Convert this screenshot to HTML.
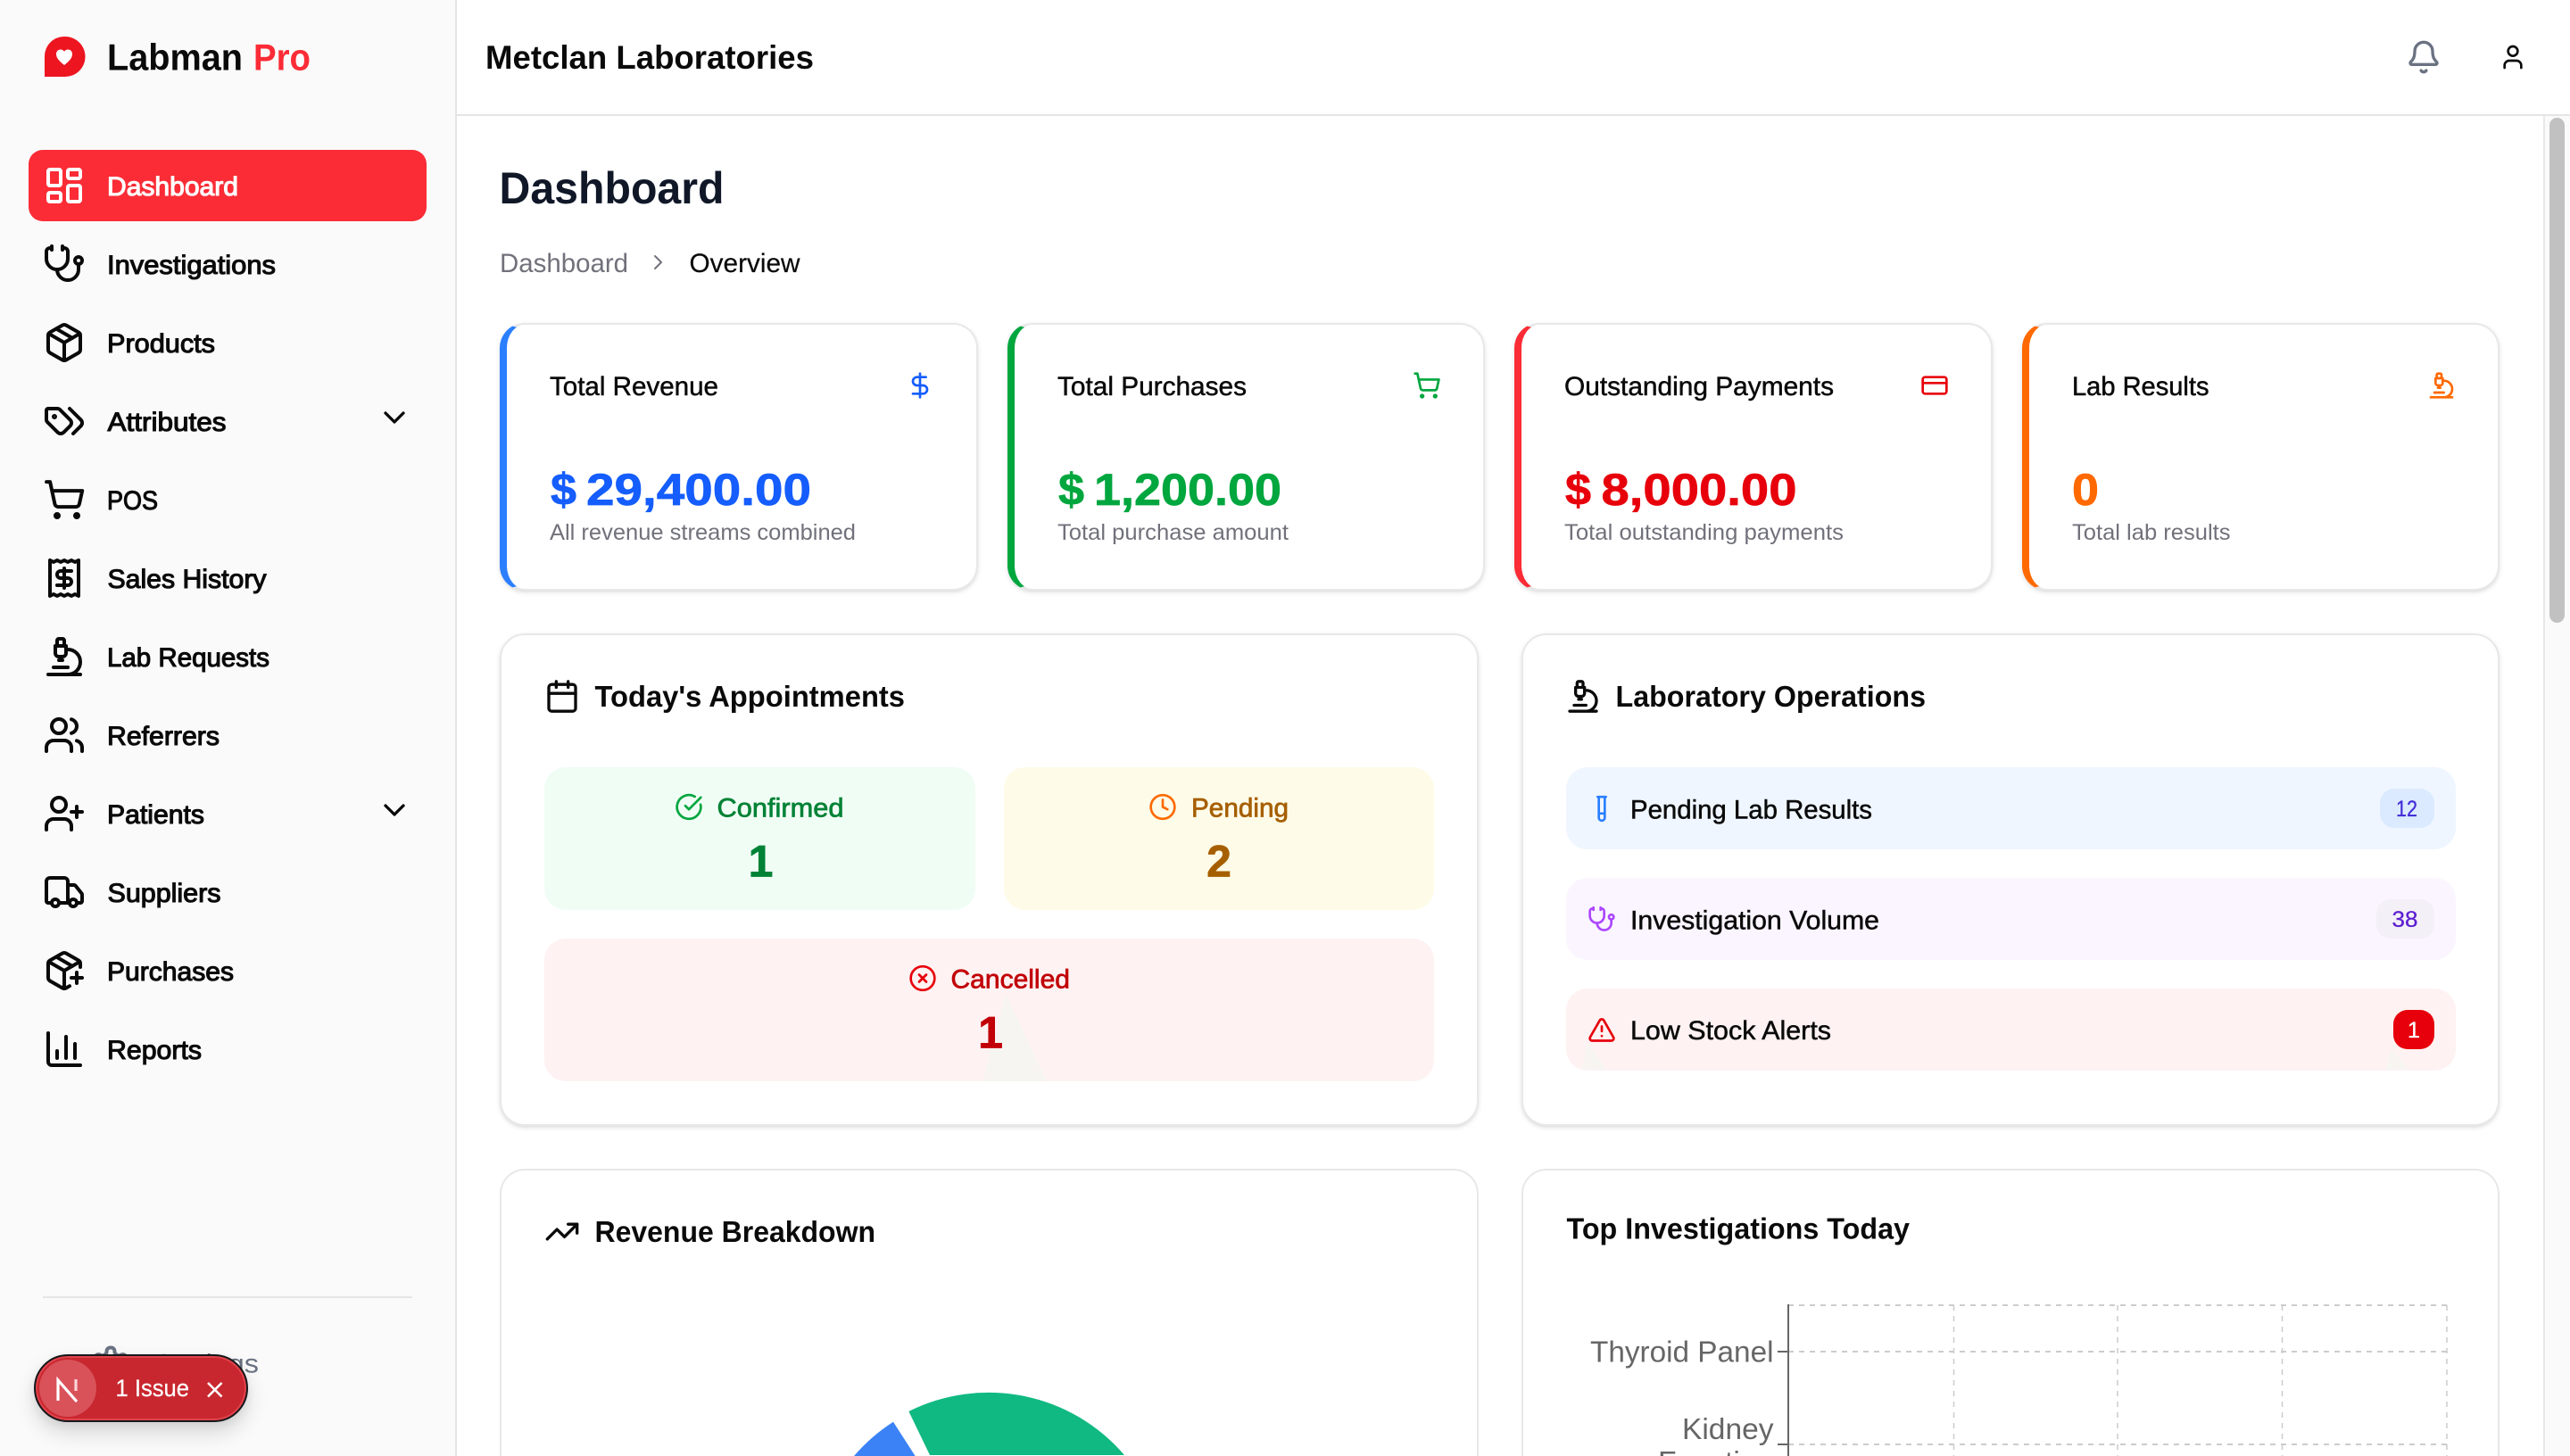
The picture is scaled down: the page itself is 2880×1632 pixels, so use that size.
<!DOCTYPE html>
<html lang="en"><head><meta charset="utf-8"><title>Labman Pro</title>
<style>
html,body{margin:0;padding:0;width:2880px;height:1632px;overflow:hidden;background:#fff;font-family:"Liberation Sans",sans-serif}
#p{position:relative;width:2880px;height:1632px;overflow:hidden}
.a{position:absolute;box-sizing:border-box}
.card{background:#fff;border:2px solid #e8e8e8;border-radius:28px;box-shadow:0 2px 6px rgba(0,0,0,.1),0 2px 4px -2px rgba(0,0,0,.1)}
.open{border-bottom:0;border-radius:28px 28px 0 0;box-shadow:none}
svg{position:absolute;left:0;top:0;overflow:hidden}
text{font-family:"Liberation Sans",sans-serif}
.nav{font-size:29.5px;font-weight:400;fill:#0a0a0a;stroke:#0a0a0a;stroke-width:1.1px}
.h{font-size:33.5px;font-weight:700;fill:#0a0a0a}
.t{font-size:29.5px;fill:#0a0a0a;stroke:#0a0a0a;stroke-width:.5px}
.v{font-size:50px;font-weight:700;stroke-width:.7px}
.s{font-size:25px;fill:#71717b}
.l{font-size:29.5px;stroke-width:.7px}
.n{font-size:50px;font-weight:700;stroke-width:.7px}
.i{fill:none;stroke-linecap:round;stroke-linejoin:round}
.ax{font-size:33.5px;fill:#666}
</style></head><body><div id="p">
<div class="a" style="left:0;top:0;width:512px;height:1632px;background:#fafafa;border-right:2px solid #e5e5e5"></div>
<div class="a" style="left:512px;top:128px;width:2368px;height:2px;background:#e5e5e5"></div>
<div class="a" style="left:32px;top:168px;width:446px;height:80px;background:#fb2c36;border-radius:16px"></div>
<div class="a" style="left:48px;top:1453px;width:414px;height:2px;background:#e5e5e5"></div>
<div class="a" style="left:2850px;top:130px;width:30px;height:1502px;background:#fafafa;border-left:2px solid #e8e8e8"></div>
<div class="a" style="left:2857px;top:132px;width:17px;height:566px;background:#c1c1c1;border-radius:9px"></div>

<div class="a card" style="left:560px;top:362px;width:536px;height:300px;border-left:8px solid #2b7fff"></div>
<div class="a card" style="left:1129px;top:362px;width:535px;height:300px;border-left:8px solid #00a63e"></div>
<div class="a card" style="left:1697px;top:362px;width:536px;height:300px;border-left:8px solid #fb2c36"></div>
<div class="a card" style="left:2266px;top:362px;width:535px;height:300px;border-left:8px solid #ff6900"></div>

<div class="a card" style="left:560px;top:710px;width:1097px;height:552px"></div>
<div class="a card" style="left:1705px;top:710px;width:1096px;height:552px"></div>
<div class="a card open" style="left:560px;top:1310px;width:1097px;height:322px"></div>
<div class="a card open" style="left:1705px;top:1310px;width:1096px;height:322px"></div>

<div class="a" style="left:610px;top:860px;width:483px;height:160px;background:#f0fdf4;border-radius:24px"></div>
<div class="a" style="left:1125px;top:860px;width:482px;height:160px;background:#fefce8;border-radius:24px"></div>
<div class="a" style="left:610px;top:1052px;width:997px;height:160px;background:#fef2f2;border-radius:24px"></div>
<div class="a" style="left:1755px;top:860px;width:997px;height:92px;background:#eff6ff;border-radius:24px"></div>
<div class="a" style="left:1755px;top:984px;width:997px;height:92px;background:#faf5ff;border-radius:24px"></div>
<div class="a" style="left:1755px;top:1108px;width:997px;height:92px;background:#fef2f2;border-radius:24px"></div>
<div class="a" style="left:2667px;top:884px;width:61px;height:44px;background:#dbeafe;border-radius:16px"></div>
<div class="a" style="left:2663px;top:1008px;width:65px;height:44px;background:#f3f0f8;border-radius:16px"></div>
<div class="a" style="left:2682px;top:1132px;width:46px;height:44px;background:#e7000b;border-radius:16px"></div>

<svg width="2880" height="1632" viewBox="0 0 2880 1632">
<!-- faint artefacts -->
<polygon points="1127,1114 1101,1212 1173,1212" fill="#f6f5f1"/>
<polygon points="1779,1168 1773,1199 1800,1199" fill="#f6f5f1"/>
<polygon points="2680,1176 2674,1199 2700,1199" fill="#f6f5f1"/>

<!-- logo -->
<path d="M50 63a22 22 0 0 1 22-22h1a22.5 22.5 0 0 1 0 45H50Z" fill="#ec1520"/>
<path d="M72 73C66 68 63 65 63 60.5C63 57.5 65.3 55.5 67.8 55.5C69.6 55.5 71 56.3 72 57.8C73 56.3 74.4 55.5 76.2 55.5C78.7 55.5 81 57.5 81 60.5C81 65 78 68 72 73Z" fill="#fff"/>
<text x="120" y="78.500" font-size="42" font-weight="700" fill="#0a0a0a" textLength="152" lengthAdjust="spacingAndGlyphs">Labman</text>
<text x="284" y="78.500" font-size="42" font-weight="700" fill="#fb2c36" textLength="64" lengthAdjust="spacingAndGlyphs">Pro</text>

<!-- nav text -->
<text class="nav" x="120" y="219" textLength="147" lengthAdjust="spacingAndGlyphs" style="fill:#fff;stroke:#fff">Dashboard</text>
<text class="nav" x="120" y="307" textLength="189" lengthAdjust="spacingAndGlyphs">Investigations</text>
<text class="nav" x="120" y="395" textLength="121" lengthAdjust="spacingAndGlyphs">Products</text>
<text class="nav" x="120.500" y="483" textLength="133" lengthAdjust="spacingAndGlyphs">Attributes</text>
<text class="nav" x="120" y="571" textLength="57" lengthAdjust="spacingAndGlyphs">POS</text>
<text class="nav" x="120.500" y="659" textLength="178" lengthAdjust="spacingAndGlyphs">Sales History</text>
<text class="nav" x="120" y="747" textLength="182" lengthAdjust="spacingAndGlyphs">Lab Requests</text>
<text class="nav" x="120" y="835" textLength="126" lengthAdjust="spacingAndGlyphs">Referrers</text>
<text class="nav" x="120" y="923" textLength="109" lengthAdjust="spacingAndGlyphs">Patients</text>
<text class="nav" x="120.500" y="1011" textLength="127" lengthAdjust="spacingAndGlyphs">Suppliers</text>
<text class="nav" x="120" y="1099" textLength="142" lengthAdjust="spacingAndGlyphs">Purchases</text>
<text class="nav" x="120" y="1187" textLength="106" lengthAdjust="spacingAndGlyphs">Reports</text>
<text x="173" y="1538.500" font-size="29.5" fill="#6a7282" textLength="117" lengthAdjust="spacingAndGlyphs">Settings</text>

<!-- nav icons -->
<g class="i" stroke="#fff" stroke-width="2" transform="translate(48 184) scale(2)"><rect x="3" y="3" width="7" height="9" rx="1"/><rect x="14" y="3" width="7" height="5" rx="1"/><rect x="14" y="12" width="7" height="9" rx="1"/><rect x="3" y="16" width="7" height="5" rx="1"/></g>
<g class="i" stroke="#0a0a0a" stroke-width="2">
<g transform="translate(48 272) scale(2)"><path d="M11 2v2M5 2v2M5 3H4a2 2 0 0 0-2 2v4a6 6 0 0 0 12 0V5a2 2 0 0 0-2-2h-1M8 15a6 6 0 0 0 12 0v-3"/><circle cx="20" cy="10" r="2"/></g>
<g transform="translate(48 360) scale(2)"><path d="M11 21.73a2 2 0 0 0 2 0l7-4A2 2 0 0 0 21 16V8a2 2 0 0 0-1-1.73l-7-4a2 2 0 0 0-2 0l-7 4A2 2 0 0 0 3 8v8a2 2 0 0 0 1 1.73zM12 22V12"/><polyline points="3.29 7 12 12 20.71 7"/><path d="m7.5 4.27 9 5.15"/></g>
<g transform="translate(48 448) scale(2)"><path d="m15 5 6.3 6.3a2.4 2.4 0 0 1 0 3.4L17 19"/><path d="M9.586 5.586A2 2 0 0 0 8.172 5H3a1 1 0 0 0-1 1v5.172a2 2 0 0 0 .586 1.414L8.29 18.29a2.426 2.426 0 0 0 3.42 0l3.58-3.58a2.426 2.426 0 0 0 0-3.42z"/><circle cx="6.5" cy="9.5" r=".5" fill="#0a0a0a"/></g>
<g transform="translate(48 536) scale(2)"><circle cx="8" cy="21" r="1"/><circle cx="19" cy="21" r="1"/><path d="M2.05 2.05h2l2.66 12.42a2 2 0 0 0 2 1.58h9.78a2 2 0 0 0 1.95-1.57l1.65-7.43H5.12"/></g>
<g transform="translate(48 624) scale(2)"><path d="M4 2v20l2-1 2 1 2-1 2 1 2-1 2 1 2-1 2 1V2l-2 1-2-1-2 1-2-1-2 1-2-1-2 1Z"/><path d="M16 8h-6a2 2 0 1 0 0 4h4a2 2 0 1 1 0 4H8"/><path d="M12 17.5v-11"/></g>
<g transform="translate(48 712) scale(2)"><path d="M6 18h8M3 22h18M14 22a7 7 0 1 0 0-14h-1M9 14h2M9 12a2 2 0 0 1-2-2V6h6v4a2 2 0 0 1-2 2ZM12 6V3a1 1 0 0 0-1-1H9a1 1 0 0 0-1 1v3"/></g>
<g transform="translate(48 800) scale(2)"><path d="M16 21v-2a4 4 0 0 0-4-4H6a4 4 0 0 0-4 4v2"/><circle cx="9" cy="7" r="4"/><path d="M22 21v-2a4 4 0 0 0-3-3.87M16 3.13a4 4 0 0 1 0 7.75"/></g>
<g transform="translate(48 888) scale(2)"><path d="M16 21v-2a4 4 0 0 0-4-4H6a4 4 0 0 0-4 4v2"/><circle cx="9" cy="7" r="4"/><path d="M19 8v6M22 11h-6"/></g>
<g transform="translate(48 976) scale(2)"><path d="M14 18V6a2 2 0 0 0-2-2H4a2 2 0 0 0-2 2v11a1 1 0 0 0 1 1h2M15 18H9M19 18h2a1 1 0 0 0 1-1v-3.65a1 1 0 0 0-.22-.624l-3.48-4.35A1 1 0 0 0 17.52 8H14"/><circle cx="17" cy="18" r="2"/><circle cx="7" cy="18" r="2"/></g>
<g transform="translate(48 1064) scale(2)"><path d="M16 16h6M19 13v6M21 10V8a2 2 0 0 0-1-1.73l-7-4a2 2 0 0 0-2 0l-7 4A2 2 0 0 0 3 8v8a2 2 0 0 0 1 1.73l7 4a2 2 0 0 0 2 0l2-1.14M7.5 4.27l9 5.15"/><polyline points="3.29 7 12 12 20.71 7"/><path d="M12 22V12"/></g>
<g transform="translate(48 1152) scale(2)"><path d="M3 3v16a2 2 0 0 0 2 2h16M18 17V9M13 17V5M8 17v-4"/></g>
</g>
<g class="i" stroke="#0a0a0a" stroke-width="2" transform="translate(422 448) scale(1.667)"><path d="m6 9 6 6 6-6"/></g>
<g class="i" stroke="#0a0a0a" stroke-width="2" transform="translate(422 888) scale(1.667)"><path d="m6 9 6 6 6-6"/></g>
<g class="i" stroke="#6a7282" stroke-width="2" transform="translate(100 1506.500) scale(2)"><path d="M12.22 2h-.44a2 2 0 0 0-2 2v.18a2 2 0 0 1-1 1.73l-.43.25a2 2 0 0 1-2 0l-.15-.08a2 2 0 0 0-2.73.73l-.22.38a2 2 0 0 0 .73 2.73l.15.1a2 2 0 0 1 1 1.72v.51a2 2 0 0 1-1 1.74l-.15.09a2 2 0 0 0-.73 2.73l.22.38a2 2 0 0 0 2.73.73l.15-.08a2 2 0 0 1 2 0l.43.25a2 2 0 0 1 1 1.73V20a2 2 0 0 0 2 2h.44a2 2 0 0 0 2-2v-.18a2 2 0 0 1 1-1.73l.43-.25a2 2 0 0 1 2 0l.15.08a2 2 0 0 0 2.73-.73l.22-.39a2 2 0 0 0-.73-2.73l-.15-.08a2 2 0 0 1-1-1.74v-.5a2 2 0 0 1 1-1.74l.15-.09a2 2 0 0 0 .73-2.73l-.22-.38a2 2 0 0 0-2.73-.73l-.15.08a2 2 0 0 1-2 0l-.43-.25a2 2 0 0 1-1-1.73V4a2 2 0 0 0-2-2z"/><circle cx="12" cy="12" r="3"/></g>

<!-- header -->
<text x="544" y="77" font-size="37" font-weight="700" fill="#0a0a0a" textLength="368" lengthAdjust="spacingAndGlyphs">Metclan Laboratories</text>
<g class="i" stroke="#6a7282" stroke-width="2" transform="translate(2696 44) scale(1.667)"><path d="M10.268 21a2 2 0 0 0 3.464 0"/><path d="M3.262 15.326A1 1 0 0 0 4 17h16a1 1 0 0 0 .74-1.673C19.41 13.956 18 12.499 18 8A6 6 0 0 0 6 8c0 4.499-1.411 5.956-2.738 7.326"/></g>
<g class="i" stroke="#0a0a0a" stroke-width="2" transform="translate(2800 48) scale(1.333)"><path d="M19 21v-2a4 4 0 0 0-4-4H9a4 4 0 0 0-4 4v2"/><circle cx="12" cy="7" r="4"/></g>

<text x="559.500" y="228" font-size="50" font-weight="700" fill="#101828" textLength="252" lengthAdjust="spacingAndGlyphs">Dashboard</text>
<text x="560" y="305" font-size="29.5" fill="#71717b" textLength="144" lengthAdjust="spacingAndGlyphs">Dashboard</text>
<g class="i" stroke="#71717b" stroke-width="2"><path d="m734 287 7 7-7 7"/></g>
<text x="772.500" y="305" font-size="29.5" fill="#0a0a0a" stroke="#0a0a0a" stroke-width=".2" textLength="124" lengthAdjust="spacingAndGlyphs">Overview</text>

<!-- stat cards -->
<text class="t" x="616" y="443" textLength="189" lengthAdjust="spacingAndGlyphs">Total Revenue</text>
<text class="v" x="617" y="566" fill="#155dfc" stroke="#155dfc" textLength="29" lengthAdjust="spacingAndGlyphs">$</text>
<text class="v" x="657" y="566" fill="#155dfc" stroke="#155dfc" textLength="252" lengthAdjust="spacingAndGlyphs">29,400.00</text>
<text class="s" x="616" y="605" textLength="343" lengthAdjust="spacingAndGlyphs">All revenue streams combined</text>
<g class="i" stroke="#155dfc" stroke-width="2" transform="translate(1015 416) scale(1.333)"><path d="M12 2v20M17 5H9.5a3.5 3.5 0 0 0 0 7h5a3.5 3.5 0 0 1 0 7H6"/></g>

<text class="t" x="1185" y="443" textLength="212" lengthAdjust="spacingAndGlyphs">Total Purchases</text>
<text class="v" x="1186" y="566" fill="#00a63e" stroke="#00a63e" textLength="29" lengthAdjust="spacingAndGlyphs">$</text>
<text class="v" x="1226" y="566" fill="#00a63e" stroke="#00a63e" textLength="210" lengthAdjust="spacingAndGlyphs">1,200.00</text>
<text class="s" x="1185" y="605" textLength="259" lengthAdjust="spacingAndGlyphs">Total purchase amount</text>
<g class="i" stroke="#00a63e" stroke-width="2" transform="translate(1583 416) scale(1.333)"><circle cx="8" cy="21" r="1"/><circle cx="19" cy="21" r="1"/><path d="M2.05 2.05h2l2.66 12.42a2 2 0 0 0 2 1.58h9.78a2 2 0 0 0 1.95-1.57l1.65-7.43H5.12"/></g>

<text class="t" x="1753" y="443" textLength="302" lengthAdjust="spacingAndGlyphs">Outstanding Payments</text>
<text class="v" x="1754" y="566" fill="#e7000b" stroke="#e7000b" textLength="29" lengthAdjust="spacingAndGlyphs">$</text>
<text class="v" x="1794.500" y="566" fill="#e7000b" stroke="#e7000b" textLength="219" lengthAdjust="spacingAndGlyphs">8,000.00</text>
<text class="s" x="1753" y="605" textLength="313" lengthAdjust="spacingAndGlyphs">Total outstanding payments</text>
<g class="i" stroke="#e7000b" stroke-width="2" transform="translate(2152 416) scale(1.333)"><rect x="2" y="5" width="20" height="14" rx="2"/><path d="M2 10h20"/></g>

<text class="t" x="2322" y="443" textLength="153.500" lengthAdjust="spacingAndGlyphs">Lab Results</text>
<text class="v" x="2322" y="566" fill="#ff6900" stroke="#ff6900" textLength="30" lengthAdjust="spacingAndGlyphs">0</text>
<text class="s" x="2322" y="605" textLength="177.500" lengthAdjust="spacingAndGlyphs">Total lab results</text>
<g class="i" stroke="#ff6900" stroke-width="2" transform="translate(2720 416) scale(1.333)"><path d="M6 18h8M3 22h18M14 22a7 7 0 1 0 0-14h-1M9 14h2M9 12a2 2 0 0 1-2-2V6h6v4a2 2 0 0 1-2 2ZM12 6V3a1 1 0 0 0-1-1H9a1 1 0 0 0-1 1v3"/></g>

<!-- appointments -->
<g class="i" stroke="#0a0a0a" stroke-width="2" transform="translate(610 760.500) scale(1.667)"><path d="M8 2v4M16 2v4"/><rect x="3" y="4" width="18" height="18" rx="2"/><path d="M3 10h18"/></g>
<text class="h" x="666.500" y="792" textLength="347.500" lengthAdjust="spacingAndGlyphs">Today's Appointments</text>

<g class="i" stroke="#00a63e" stroke-width="2" transform="translate(756 888.500) scale(1.333)"><path d="M21.801 10A10 10 0 1 1 17 3.335"/><path d="m9 11 3 3L22 4"/></g>
<text class="l" x="803.500" y="915.500" fill="#008236" stroke="#008236" textLength="142" lengthAdjust="spacingAndGlyphs">Confirmed</text>
<text class="n" x="852.500" y="982.500" fill="#008236" stroke="#008236" text-anchor="middle">1</text>

<g class="i" stroke="#ff6900" stroke-width="2" transform="translate(1287 888.500) scale(1.333)"><circle cx="12" cy="12" r="10"/><path d="M12 6v6l4 2"/></g>
<text class="l" x="1335" y="915.500" fill="#a65f00" stroke="#a65f00" textLength="109" lengthAdjust="spacingAndGlyphs">Pending</text>
<text class="n" x="1366" y="982.500" fill="#a65f00" stroke="#a65f00" text-anchor="middle">2</text>

<g class="i" stroke="#e7000b" stroke-width="2" transform="translate(1018 1080.500) scale(1.333)"><circle cx="12" cy="12" r="10"/><path d="m15 9-6 6M9 9l6 6"/></g>
<text class="l" x="1065.500" y="1107.500" fill="#c10007" stroke="#c10007" textLength="133.500" lengthAdjust="spacingAndGlyphs">Cancelled</text>
<text class="n" x="1110" y="1174.500" fill="#c10007" stroke="#c10007" text-anchor="middle">1</text>

<!-- lab ops -->
<g class="i" stroke="#0a0a0a" stroke-width="2" transform="translate(1754 760.500) scale(1.667)"><path d="M6 18h8M3 22h18M14 22a7 7 0 1 0 0-14h-1M9 14h2M9 12a2 2 0 0 1-2-2V6h6v4a2 2 0 0 1-2 2ZM12 6V3a1 1 0 0 0-1-1H9a1 1 0 0 0-1 1v3"/></g>
<text class="h" x="1810.500" y="792" textLength="347.500" lengthAdjust="spacingAndGlyphs">Laboratory Operations</text>

<g class="i" stroke="#2b7fff" stroke-width="2" transform="translate(1779 890.500) scale(1.333)"><path d="M14.5 2v17.5c0 1.4-1.1 2.5-2.5 2.5c-1.4 0-2.5-1.1-2.5-2.5V2M8.5 2h7M14.5 16h-5"/></g>
<text class="t" x="1827" y="917.500" textLength="271" lengthAdjust="spacingAndGlyphs">Pending Lab Results</text>
<text x="2685" y="915" font-size="25" fill="#432dd7" stroke="#432dd7" stroke-width=".3" textLength="24" lengthAdjust="spacingAndGlyphs">12</text>

<g class="i" stroke="#ad46ff" stroke-width="2" transform="translate(1779 1014.500) scale(1.333)"><path d="M11 2v2M5 2v2M5 3H4a2 2 0 0 0-2 2v4a6 6 0 0 0 12 0V5a2 2 0 0 0-2-2h-1M8 15a6 6 0 0 0 12 0v-3"/><circle cx="20" cy="10" r="2"/></g>
<text class="t" x="1827" y="1041.500" textLength="279" lengthAdjust="spacingAndGlyphs">Investigation Volume</text>
<text x="2680.500" y="1039" font-size="25" fill="#5d1fd0" stroke="#5d1fd0" stroke-width=".3" textLength="29" lengthAdjust="spacingAndGlyphs">38</text>

<g class="i" stroke="#e7000b" stroke-width="2" transform="translate(1779 1138.500) scale(1.333)"><path d="m21.73 18-8-14a2 2 0 0 0-3.48 0l-8 14A2 2 0 0 0 4 21h16a2 2 0 0 0 1.73-3M12 9v4M12 17h.01"/></g>
<text class="t" x="1827" y="1165" textLength="225" lengthAdjust="spacingAndGlyphs">Low Stock Alerts</text>
<text x="2705" y="1163" font-size="25" fill="#fff" stroke="#fff" stroke-width=".3" text-anchor="middle">1</text>

<!-- revenue -->
<g class="i" stroke="#0a0a0a" stroke-width="2" transform="translate(610 1360.500) scale(1.667)"><polyline points="22 7 13.5 15.5 8.5 10.5 2 17"/><polyline points="16 7 22 7 22 13"/></g>
<text class="h" x="666.500" y="1392" textLength="314.500" lengthAdjust="spacingAndGlyphs">Revenue Breakdown</text>
<path d="M1025.600 1632L1001 1593.700A200 200 0 0 0 957 1632Z" fill="#3b82f6"/>
<path d="M1042 1632L1018.400 1583A200 200 0 0 1 1260 1632Z" fill="#10b981" transform="translate(0 -1)"/>

<!-- top investigations -->
<text class="h" x="1755.500" y="1388.500" textLength="384.500" lengthAdjust="spacingAndGlyphs">Top Investigations Today</text>
<g fill="none" stroke="#ccc" stroke-width="2" stroke-dasharray="6 6">
<path d="M2004 1463H2742M2004 1515H2742M2004 1619H2742"/>
<path stroke-width="1.5" d="M2189.5 1463V1632M2373 1463V1632M2557.5 1463V1632M2742 1463V1632"/>
</g>
<path d="M2004 1462V1632M1992 1515H2004M1992 1619H2004" fill="none" stroke="#666" stroke-width="2"/>
<text class="ax" x="1782" y="1526.500" textLength="205.500" lengthAdjust="spacingAndGlyphs">Thyroid Panel</text>
<text class="ax" x="1885" y="1613" textLength="102.500" lengthAdjust="spacingAndGlyphs">Kidney</text>
<text class="ax" x="1858" y="1650" textLength="129.500" lengthAdjust="spacingAndGlyphs">Function</text>
</svg>

<!-- dev badge -->
<div class="a" style="left:38px;top:1518px;width:240px;height:76px;border-radius:38px;background:#c9272f;border:2.5px solid #17181a;box-shadow:inset 0 0 0 2px #e0434c,0 12px 24px rgba(0,0,0,.14),0 4px 10px rgba(0,0,0,.06)"></div>
<div class="a" style="left:44px;top:1524px;width:64px;height:64px;border-radius:50%;background:#d9525a"></div>
<svg width="300" height="1632" viewBox="0 0 300 1632">
<path d="M65 1570V1547L86 1571" fill="none" stroke="#fff" stroke-width="3.2"/>
<path d="M85 1546V1559" fill="none" stroke="#fbd5d7" stroke-width="3.2"/>
<text x="129.500" y="1565" font-size="26.5" fill="#fff" stroke="#fff" stroke-width=".2" textLength="82.500" lengthAdjust="spacingAndGlyphs">1 Issue</text>
<path d="M233 1550L248.500 1565.500M248.500 1550L233 1565.500" stroke="#fff" stroke-width="2.600" fill="none"/>
</svg>
</div></body></html>
